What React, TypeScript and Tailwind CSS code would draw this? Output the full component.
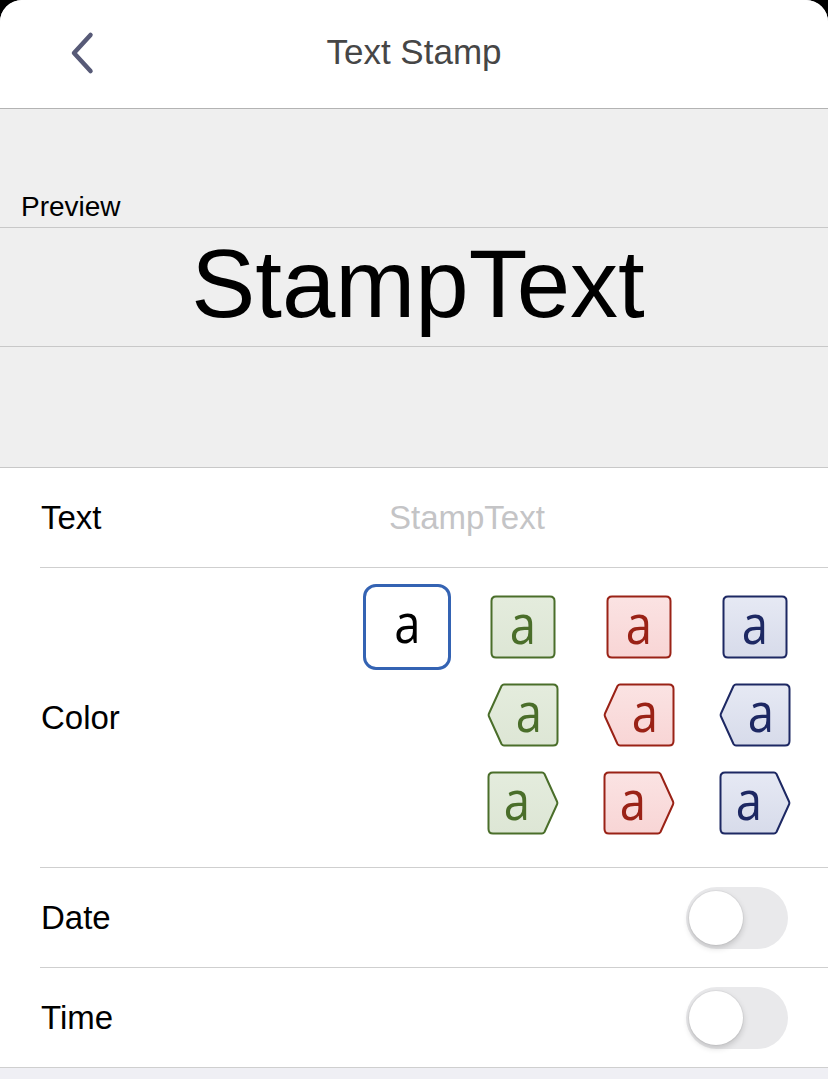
import React from 'react';

type Tone = { fill1: string; fill2: string; stroke: string; text: string };

const tones: Record<string, Tone> = {
  green: { fill1: '#e4ecdd', fill2: '#dde6d5', stroke: '#4a6e2a', text: '#4a6e2a' },
  red: { fill1: '#fbe3e3', fill2: '#f8d5d5', stroke: '#9a2216', text: '#9a2216' },
  blue: { fill1: '#e6e9f4', fill2: '#d7dbea', stroke: '#1d2863', text: '#1d2863' },
};

const Stamp: React.FC<{ tone: string; shape: 'square' | 'left' | 'right' }> = ({ tone, shape }) => {
  const t = tones[tone];
  const id = `g-${tone}-${shape}`;
  let d = '';
  let w = 66;
  let tx = 33;
  if (shape === 'square') {
    d = 'M6 1.5 H60 Q64.5 1.5 64.5 6 V58 Q64.5 62.5 60 62.5 H6 Q1.5 62.5 1.5 58 V6 Q1.5 1.5 6 1.5 Z';
  } else if (shape === 'left') {
    w = 72;
    tx = 42;
    d = 'M17 1.5 H66 Q70.5 1.5 70.5 6 V58 Q70.5 62.5 66 62.5 H17 Q15.5 62.5 14.5 61 L2 33.5 Q1.3 32 2 30.5 L14.5 3 Q15.5 1.5 17 1.5 Z';
  } else {
    w = 72;
    tx = 30;
    d = 'M6 1.5 H55 Q56.5 1.5 57.5 3 L70 30.5 Q70.7 32 70 33.5 L57.5 61 Q56.5 62.5 55 62.5 H6 Q1.5 62.5 1.5 58 V6 Q1.5 1.5 6 1.5 Z';
  }
  return (
    <svg width={w} height={64} viewBox={`0 0 ${w} 64`} overflow="visible">
      <defs>
        <linearGradient id={id} x1="0" y1="0" x2="0" y2="1">
          <stop offset="0" stopColor={t.fill1} />
          <stop offset="1" stopColor={t.fill2} />
        </linearGradient>
      </defs>
      <path d={d} fill={`url(#${id})`} stroke={t.stroke} strokeWidth={2} strokeLinejoin="round" />
      <text
        x={0}
        y={0}
        transform={`translate(${tx} 49) scale(0.86 1)`}
        textAnchor="middle"
        fontSize={55}
        fill={t.text}
        style={{ fontFamily: '"Open Sans", "Noto Sans", sans-serif' }}
      >
        a
      </text>
    </svg>
  );
};

const Toggle: React.FC = () => (
  <div className="relative w-[102px] h-[62px] rounded-full bg-[#e9e9eb]">
    <div className="absolute left-[3px] top-[4px] w-[54px] h-[54px] rounded-full bg-white shadow-[0_3px_6px_rgba(0,0,0,0.18),0_0_0_1px_rgba(0,0,0,0.04)]" />
  </div>
);

const App: React.FC = () => {
  const font = { fontFamily: '"Liberation Sans", Arial, sans-serif' };
  return (
    <div className="w-[828px] h-[1079px] bg-black overflow-hidden" style={font}>
      <div className="h-full bg-[#efeff4] rounded-t-[22px] overflow-hidden flex flex-col">
        {/* nav */}
        <div className="relative h-[109px] bg-white border-b border-[#b3b3b3] flex items-center justify-center">
          <svg className="absolute left-[66px] top-[30px]" width="32" height="46" viewBox="0 0 32 46">
            <path d="M24.5 5 L8 23 L24.5 41" fill="none" stroke="#575a77" strokeWidth="4.5" strokeLinecap="round" strokeLinejoin="round" />
          </svg>
          <span className="text-[35px] text-[#464646] -mt-[4px]">Text Stamp</span>
        </div>

        {/* preview */}
        <div className="bg-[#efefef] flex flex-col">
          <div className="h-[119px] border-b border-[#c8c8c8] flex items-end px-[21px] pb-[6px]">
            <span className="text-[28px] text-black leading-none">Preview</span>
          </div>
          <div className="h-[119px] border-b border-[#c8c8c8] flex items-center justify-center pl-[8px]">
            <span className="text-[96px] text-black leading-none -mt-[6px]">StampText</span>
          </div>
          <div className="h-[121px] border-b border-[#c8c8c8]" />
        </div>

        {/* form */}
        <div className="bg-white">
          <div className="h-[99px] flex items-center pl-[41px]">
            <span className="text-[33px] text-black w-[348px]">Text</span>
            <span className="text-[33px] text-[#c4c4c6]">StampText</span>
          </div>
          <div className="ml-[40px] border-t border-[#cfcfcf] h-[300px] flex items-center pr-[15px]">
            <span className="text-[33px] text-black pl-[1px] flex-1">Color</span>
            <div className="grid grid-cols-[116px_116px_116px_116px] grid-rows-[88px_88px_88px] -mt-[6px]">
              <div className="flex items-center justify-center">
                <div className="w-[88px] h-[86px] rounded-[13px] border-[3px] border-[#3463b3] bg-white flex items-center justify-center">
                  <span
                    className="inline-block text-[55px] text-black leading-none -mt-[10px] scale-x-[0.86]"
                    style={{ fontFamily: '"Open Sans", "Noto Sans", sans-serif' }}
                  >
                    a
                  </span>
                </div>
              </div>
              <div className="flex items-center justify-center"><Stamp tone="green" shape="square" /></div>
              <div className="flex items-center justify-center"><Stamp tone="red" shape="square" /></div>
              <div className="flex items-center justify-center"><Stamp tone="blue" shape="square" /></div>
              <div />
              <div className="flex items-center justify-center"><Stamp tone="green" shape="left" /></div>
              <div className="flex items-center justify-center"><Stamp tone="red" shape="left" /></div>
              <div className="flex items-center justify-center"><Stamp tone="blue" shape="left" /></div>
              <div />
              <div className="flex items-center justify-center"><Stamp tone="green" shape="right" /></div>
              <div className="flex items-center justify-center"><Stamp tone="red" shape="right" /></div>
              <div className="flex items-center justify-center"><Stamp tone="blue" shape="right" /></div>
            </div>
          </div>
          <div className="ml-[40px] border-t border-[#cfcfcf] h-[100px] flex items-center justify-between pr-[40px]">
            <span className="text-[33px] text-black pl-[1px]">Date</span>
            <Toggle />
          </div>
          <div className="ml-[40px] border-t border-[#cfcfcf] h-[100px] flex items-center justify-between pr-[40px]">
            <span className="text-[33px] text-black pl-[1px]">Time</span>
            <Toggle />
          </div>
        </div>
        <div className="border-t border-[#cfcfcf] flex-1 bg-[#efeff4]" />
      </div>
    </div>
  );
};

export default App;
